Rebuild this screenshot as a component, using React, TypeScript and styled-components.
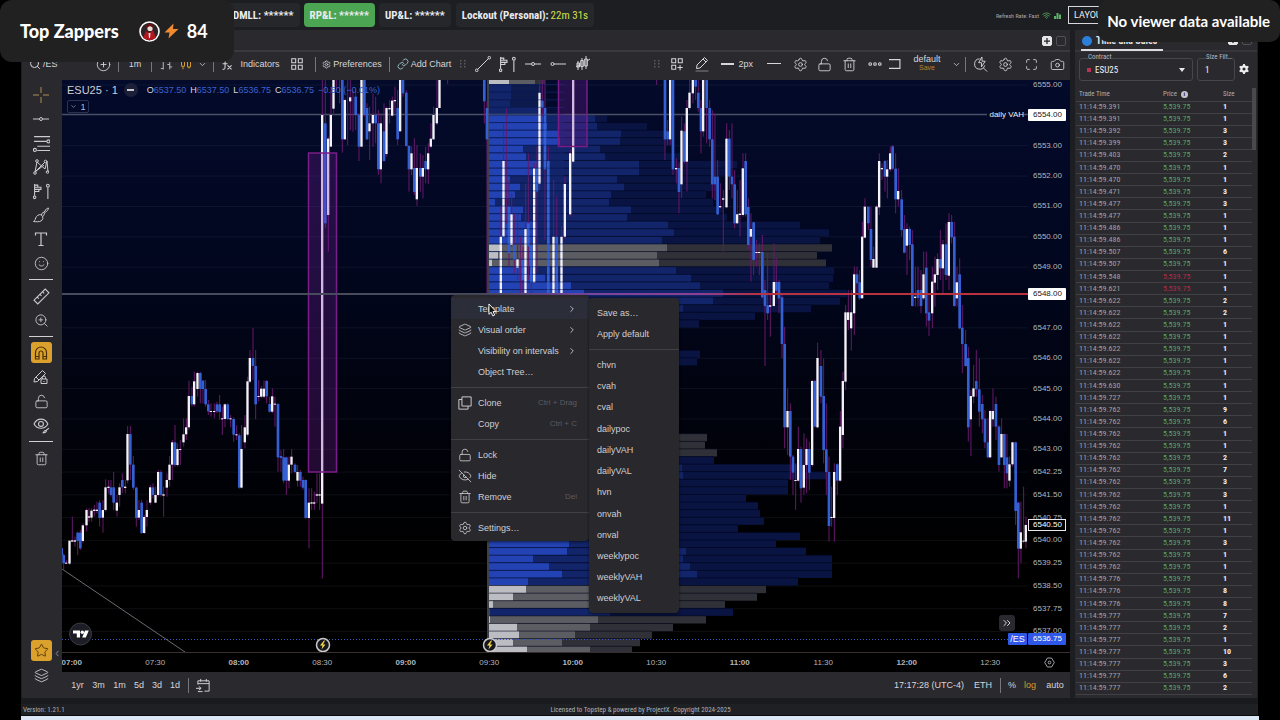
import React from "react";
import styled, { createGlobalStyle } from "styled-components";
import {
  Camera, ChevronDown, ChevronRight, ChevronsRight, Copy, EyeOff, Eye, Layers, Link as LinkIcon, LockOpen,
  Maximize, Pencil, PlusCircle, Ruler, Search, Settings, Smile, Star, Trash2, Wifi, ZoomIn,
} from "lucide-react";

const sans = `"Liberation Sans", Arial, sans-serif`;
const narrow = `"Roboto Condensed", "Liberation Sans Narrow", Roboto, sans-serif`;

const Global = createGlobalStyle`
  * { box-sizing: border-box; }
  body { margin: 0; background: #000; color: #d4d4d8; font-family: ${sans}; font-size: 9px; }
  button, input, select { font: inherit; color: inherit; background: none; border: 0; padding: 0; margin: 0; }
  button { cursor: pointer; }
`;

/* ---------- page frame ---------- */
const Page = styled.div`
  position: relative; min-height: 100vh; display: flex; flex-direction: column; overflow: hidden;
  margin: 0; padding: 0 22px 0 21px;
`;
const Header = styled.header`
  height: 30px; display: flex; align-items: center; gap: 4px; padding: 0 130px 0 206px;
  background: #1d1e22; font-family: ${narrow};
`;
const Pill = styled.div<{ $on?: boolean; $wide?: boolean }>`
  height: 24px; display: flex; align-items: center; gap: 2px; padding: 0 6px; border-radius: 4px;
  margin-left: ${(p) => (p.$wide ? "1px" : "0")};
  background: ${(p) => (p.$on ? "#4ba553" : "#26272b")};
  color: #ececee; font-size: 11px; font-weight: 700; white-space: nowrap;
`;
const Lime = styled.span`color: #cfe04a; font-weight: 400;`;
const Refresh = styled.div`
  margin-left: auto; display: flex; align-items: center; gap: 3px; margin-right: 3px;
  font-size: 6px; color: #a9a9ae; white-space: nowrap;
`;
const LayoutButton = styled.button`
  width: 60px; height: 18px; border: 1px solid #d8d8dc; font: 9px Roboto, sans-serif; text-align: left;
  padding-left: 5px; color: #eee;
`;
const Main = styled.main`flex: 1; min-height: 0; display: flex; gap: 5px; background: #1d1e22;`;
const Footer = styled.footer`
  height: 18px; display: flex; align-items: center; background: #1f2024; border-bottom: 1px solid #0b0b0d;
  border-top: 6px solid #1a1b1f; font: 7px ${narrow}; color: #b0b0b4;
  span { flex: 1; padding-left: 2px; }
  p { margin: 0; }
  &::after { content: ""; flex: 1; }
`;
const Strip = styled.div`height: 4px; background: #dce7f5; margin-right: -1px;`;

/* ---------- chart panel ---------- */
const ChartPanel = styled.section`
  flex: 1; min-width: 0; display: flex; flex-direction: column; background: #2a292e; margin-left: 1px;
`;
const TabStrip = styled.div`
  height: 22px; display: flex; align-items: center; justify-content: flex-end; gap: 4px; padding: 2px 4px 0 0;
  border-bottom: 2px solid #3a393e;
`;
const SquareButton = styled.button<{ $solid?: boolean }>`
  width: 10px; height: 10px; border-radius: 2px; display: grid; place-items: center;
  background: ${(p) => (p.$solid ? "#e6e6e8" : "transparent")};
  border: 1px solid ${(p) => (p.$solid ? "#e6e6e8" : "#515056")};
  color: #222;
`;
const Toolbar = styled.div`height: 28px; display: flex; align-items: center; font-size: 9px; padding-bottom: 4px;`;
const Cell = styled.button<{ $w: number; $amber?: boolean; $start?: boolean }>`
  width: ${(p) => p.$w}px; height: 24px; flex: none; display: flex; align-items: center; gap: 2px; white-space: nowrap;
  justify-content: ${(p) => (p.$start ? "flex-start" : "center")};
  padding: 0 ${(p) => (p.$start ? "7px" : "0")};
  color: ${(p) => (p.$amber ? "#d99a2b" : "#d6d6d9")};
`;
const Bar = styled.i<{ $w?: number }>`
  width: ${(p) => p.$w ?? 6}px; height: 15px; flex: none; display: block;
  background: linear-gradient(#77767b, #77767b) center / 1px 100% no-repeat;
`;
const Spacer = styled.div`flex: 1;`;
const LayoutName = styled.span`
  display: flex; flex-direction: column; align-items: center; font-size: 9px; line-height: 9px; padding-bottom: 2px;
  small { font-size: 7px; line-height: 7px; color: #b9822c; }
`;
const ChartBody = styled.div`position: relative; flex: 1; min-height: 0; display: flex;`;
const SideTools = styled.nav`width: 40px; display: flex; flex-direction: column; align-items: center; padding: 3px 2px 11px 0;`;
const SideTool = styled.button<{ $active?: boolean }>`
  width: 21px; height: ${(p) => (p.$active ? 21 : 24)}px; flex: none; display: grid; place-items: center; border-radius: 3px;
  background: ${(p) => (p.$active ? "#dba12c" : "transparent")};
  color: ${(p) => (p.$active ? "#4a3008" : "#cbcbd0")};
  margin: ${(p) => (p.$active ? "1px 0 2px" : "0")};
`;
const SideRule = styled.hr`width: 24px; height: 1px; border: 0; margin: 4px 0; background: #cfcfd4; flex: none;`;
const FoldHandle = styled.button`
  position: absolute; left: 32px; bottom: 41px; width: 7px; height: 8px; display: grid; place-items: center; color: #9a9aa0;
`;
const ChartColumn = styled.div`flex: 1; min-width: 0; display: flex; flex-direction: column;`;
const PlotRow = styled.div`
  flex: 1; min-height: 0; display: flex; border-bottom: 1px solid #37302c;
  background: linear-gradient(#030a2a, #020720 30%, #01030f 55%, #000 82%);
`;
const Plot = styled.div`position: relative; flex: 1; min-width: 0;`;
const PlotDrawing = styled.svg`position: absolute; inset: 0; width: 100%; height: 100%;`;
const PriceAxis = styled.div`position: relative; width: 42px; font-size: 8px; color: #b4b5bd;`;
const Tick = styled.span<{ $kind?: "line" | "last" | "blue" }>`
  position: absolute; left: 0; width: 38px; height: 12px; line-height: 12px; margin-top: -6px; padding-left: 5px;
  ${(p) => p.$kind === "line" && "background:#fff;color:#15161a;border-radius:1px;"}
  ${(p) => p.$kind === "last" && "background:#000;color:#fff;outline:1px solid #e8e8ea;outline-offset:-1px;"}
  ${(p) => p.$kind === "blue" && "background:#2f57e8;color:#fff;border-radius:1px;"}
`;
const Symbol = styled.span`
  position: absolute; right: 1px; bottom: 7px; width: 19px; height: 12px; line-height: 12px; text-align: center;
  background: #2f57e8; color: #fff; font-size: 9px; border-radius: 1px;
`;
const LineLabel = styled.span`
  position: absolute; right: 4px; top: 28px; font-size: 8px; line-height: 13px; color: #f0f0f2;
  background: #030926; padding-left: 2px;
`;
const Legend = styled.div`
  position: absolute; left: 5px; top: 3px; display: flex; align-items: center; height: 14px; font-size: 9px; color: #3b63cf;
  gap: 4px; white-space: nowrap;
  h1 { margin: 0; font-size: 11px; font-weight: 400; color: #cfd0d6; }
  b { font-weight: 400; color: #d8d9de; }
`;
const Dash = styled.i`
  width: 14px; height: 14px; margin: 0 5px 0 2px; border-radius: 7px; display: block;
  background: linear-gradient(#c8c8cc, #c8c8cc) center / 7px 2px no-repeat, #1b2038;
`;
const Collapse = styled.button`
  position: absolute; left: 5px; top: 20px; width: 22px; height: 13px; border: 1px solid #2a3050; border-radius: 2px;
  display: flex; align-items: center; justify-content: center; gap: 3px; color: #b9bbc6; font-size: 9px;
`;
const JumpButton = styled.button`
  position: absolute; right: 13px; bottom: 21px; width: 16px; height: 16px; border-radius: 3px; background: #2a2930;
  display: grid; place-items: center; color: #d6d6da;
`;
const TimeAxis = styled.div`
  height: 19px; display: flex; background: #000; color: #b4b5bd; font-size: 8px; overflow: hidden;
`;
const TimeCells = styled.div`flex: 1; display: flex; margin-left: -32px; margin-right: -4px;`;
const TimeCell = styled.span<{ $hour: boolean }>`
  flex: 1; text-align: center; line-height: 19px; font-weight: ${(p) => (p.$hour ? 700 : 400)};
`;
const AxisCorner = styled.button`width: 42px; display: grid; place-items: center; color: #c4c4c8;`;
const RangeBar = styled.div`height: 26px; display: flex; align-items: center; font-size: 9px; color: #c9c9cd; padding-left: 5px;`;

/* ---------- menus ---------- */
const Menu = styled.div`
  position: absolute; left: 389px; top: 215px; width: 138px; padding: 3px 0; border-radius: 4px;
  background: #29282d; color: #cfcfd3; box-shadow: 0 1px 3px rgba(0, 0, 0, .6);
`;
const MenuRow = styled.button<{ $hot?: boolean }>`
  width: 100%; height: 21px; display: grid; grid-template-columns: 27px 1fr auto; align-items: center; text-align: left;
  font-size: 9px; white-space: nowrap; padding-right: 12px;
  background: ${(p) => (p.$hot ? "#2b2d38" : "transparent")};
  svg:first-child { justify-self: center; }
  kbd { font: 8px ${sans}; color: #5c5b61; }
  span { grid-column: 2; }
`;
const MenuRule = styled.hr`width: 100%; height: 1px; border: 0; margin: 5px 0 4px; background: #414046;`;
const SubMenu = styled.div`
  position: absolute; left: 527px; top: 218px; width: 90px; height: 315px; padding: 4px 0; border-radius: 4px;
  background: #29282d; color: #cfcfd3; display: flex; flex-direction: column; box-shadow: 0 1px 3px rgba(0, 0, 0, .6);
`;
const SubRow = styled.button`flex: 1; text-align: left; padding-left: 8px; font-size: 9px;`;
const Cursor = styled.svg`position: absolute; left: 426px; top: 223px; width: 9px; height: 14px;`;

/* ---------- time & sales ---------- */
const Tape = styled.aside`
  width: 182px; display: flex; flex-direction: column; background: #2a292e; font-family: ${narrow}; margin-right: 1px;
`;
const TapeTabs = styled.div`
  height: 22px; display: flex; align-items: center; gap: 4px; padding: 0 5px 0 6px; border-bottom: 2px solid #36353a;
`;
const TapeTab = styled.button`
  width: 82px; height: 21px; display: flex; align-items: center; gap: 4px; border-bottom: 2px solid #dcdce0;
  padding-top: 3px; font-size: 10px; font-weight: 700; color: #e2e2e4; margin-right: auto; white-space: nowrap;
`;
const BlueDot = styled.i`width: 10px; height: 10px; border-radius: 5px; background: #2b7fd8; display: block; flex: none; margin-left: 1px;`;
const Filters = styled.form`height: 36px; display: flex; align-items: center; gap: 4px; padding: 0 8px 0 4px; margin: 0;`;
const Field = styled.label<{ $w?: number }>`
  position: relative; height: 23px; display: flex; align-items: center; gap: 4px; padding: 0 7px; margin-top: -1px;
  border: 1px solid #47464c; border-radius: 3px; ${(p) => (p.$w ? `width:${p.$w}px;` : "flex:1;")}
  > span { position: absolute; top: -6px; left: 8px; font-size: 7px; line-height: 9px; background: #2a292e; color: #b9b9bd; white-space: nowrap; }
  select, input { appearance: none; flex: 1; width: 10px; font-size: 9px; color: #f2f2f3; outline: 0; }
`;
const RedDot = styled.i`width: 4px; height: 4px; background: #b83254; display: block;`;
const Caret = styled.i`border: 3px solid transparent; border-top: 4px solid #e8e8ea; border-bottom: 0;`;
const TapeScroll = styled.div`
  flex: 1 1 0; min-height: 0; overflow: hidden; margin-bottom: 1px; padding: 0 5px 0 1px;
  background: linear-gradient(#4a494e, #4a494e) right 1px top / 4px 62px no-repeat;
`;
const Table = styled.table`
  width: 100%; height: 618px; border-collapse: collapse; table-layout: fixed; font-size: 8px; line-height: 10px;
  th { height: 13px; font-size: 7px; font-weight: 400; color: #aeaeb2; text-align: left; padding: 0 0 0 3px; }
  td { padding: 0 0 0 3px; border-top: 1px solid #414045; color: #a0a0a5; }
  td:last-child { color: #f0f0f2; font-weight: 700; }
`;
const Price = styled.td<{ $down?: boolean }>`&& { color: ${(p) => (p.$down ? "#b02c48" : "#58a464")}; }`;
const Info = styled.i`
  display: inline-grid; place-items: center; width: 7px; height: 7px; border-radius: 4px; background: #c6c6ca; color: #222;
  font: 700 6px ${sans}; margin-left: 2px; vertical-align: middle;
`;

/* ---------- stream overlays ---------- */
const Zappers = styled.div`
  position: absolute; left: 0; top: 0; width: 234px; height: 62px; border-radius: 12px; background: #212121;
  display: flex; align-items: center; padding-left: 20px; color: #fff; font: 700 18px Lato, sans-serif;
  strong { margin-right: 20px; } svg + svg { margin: 0 8px 0 4px; }
`;
const Viewers = styled.div`
  position: absolute; right: 0; top: 0; width: 182px; height: 42px; border-radius: 10px; background: #212121;
  display: flex; align-items: center; justify-content: flex-end; padding-right: 10px; color: #fff; font: 700 15px Lato, sans-serif;
  white-space: nowrap;
`;

/* ---------- data ---------- */
type Candle = [k: number, x: number, top: number, bottom: number, high: number, low: number];
// k: 1 = up (white), 0 = down (blue), 2 = wick only. Coordinates are thirds of a chart unit from the segment origin.
const segments: { at: [number, number]; bars: Candle[] }[] = [
  { at: [20, 340], bars: [
    [0,125,625,645,620,650],[0,131,645,670,640,690],[1,139,668,671,660,672],[1,149,602,671,602,675],[1,157,601,605,530,605],[1,165,601,605,590,620],
    [0,173,578,603,575,645],[0,181,578,625,570,630],[1,189,556,603,550,610],[1,200,510,556,505,575],[1,207,529,533,505,545],[1,215,512,533,505,545],
    [1,223,509,513,495,530],[1,231,509,513,485,520],[0,239,488,534,480,560],[1,249,510,533,480,578],[1,257,442,510,418,515],[1,266,440,444,420,460],
    [0,273,442,465,420,470],[0,281,442,488,396,510],[1,291,488,512,465,530],[1,299,442,465,430,500],[0,307,420,442,400,460],[1,316,440,444,420,460],
    [1,323,282,421,258,430],[0,331,282,374,258,420],[0,340,374,443,348,450],[0,349,443,534,440,560],[1,357,510,533,480,540],[0,365,488,579,480,582],
    [1,373,531,579,525,582],[1,381,510,531,480,560],[1,391,442,488,435,495],[0,399,442,465,430,475],[1,407,465,488,440,490],[1,415,396,465,390,470],
    [0,423,396,465,390,470],[1,431,463,467,440,530],[1,441,420,443,400,470],[1,449,374,420,348,440],[1,457,307,374,300,420],[0,465,307,375,255,380],
    [1,473,327,375,310,380],[1,481,327,330,300,375],[1,491,283,307,235,320],[1,499,262,283,235,300],[1,507,168,262,122,270],[0,516,168,193,140,200],
    [1,523,124,193,95,200],[1,533,99,147,95,170],[0,541,99,147,95,190],[0,549,122,147,120,190],[0,557,147,193,120,200],[0,565,193,214,180,225],
    [1,573,213,216,190,230],[1,583,213,216,190,235],[0,591,193,214,185,220],[0,599,193,216,165,240],[1,607,235,238,200,285],[1,615,193,237,190,262],
    [0,623,193,237,190,240],[1,632,235,238,225,262],[0,641,237,284,232,305],[1,650,283,286,255,300],[0,658,286,443,280,446],[1,665,327,443,255,446],
    [1,675,262,307,225,325],[1,683,124,284,110,290],
  ] },
  { at: [240, 330], bars: [
    [1,30,84,155,60,160],[0,39,84,108,-6,150],[0,47,108,223,60,268],[1,56,198,201,150,215],[1,64,176,200,168,205],[1,72,176,200,152,205],
    [0,80,153,199,150,220],[0,89,222,245,200,248],[1,97,199,245,175,250],[1,105,221,224,200,290],[0,114,222,382,220,425],[0,123,378,384,360,425],
    [0,131,382,452,357,460],[0,139,382,452,380,495],[1,147,404,452,380,475],[1,155,380,404,357,430],[0,165,404,426,400,430],[1,173,426,452,405,470],
    [0,181,426,452,420,470],[0,189,450,473,440,480],[0,197,450,564,448,566],[1,207,518,564,475,655],[1,215,517,521,475,540],[1,223,517,521,485,540],
    [1,231,493,497,430,520],[1,239,493,497,430,540],[1,247,-645,521,-750,746],
  ] },
  { at: [240, 80], bars: [
    [0,256,130,430,0,445],[1,265,176,405,170,515],[1,273,105,200,20,200],[1,281,0,86,0,100],[2,289,0,0,0,30],[2,299,0,0,0,70],[0,307,0,178,0,218],
    [1,315,60,178,55,180],[2,323,0,0,0,195],[1,331,52,64,0,150],[2,339,0,0,30,155],[0,347,50,105,30,150],[0,357,105,200,100,243],[1,365,0,200,0,200],
    [0,373,0,105,0,110],[0,381,84,178,70,180],[1,389,130,154,80,240],[1,399,105,130,40,200],[0,407,105,130,50,190],[0,415,130,268,90,285],
    [1,423,130,268,100,310],[0,432,154,243,70,245],[1,440,84,222,80,230],[1,449,84,88,60,130],[1,457,62,107,50,110],[1,465,60,64,20,100],
    [0,473,84,178,30,195],[1,481,0,154,0,154],[0,489,0,40,0,50],[0,499,38,198,30,200],[0,507,198,268,195,335],[1,515,220,268,200,285],
    [0,523,264,336,175,345],[1,531,264,358,195,378],[0,541,264,290,220,335],[1,549,264,290,225,355],[0,557,243,268,200,310],[1,565,220,268,190,312],
    [1,573,176,200,130,205],[1,581,105,178,80,180],[1,591,84,130,0,135],[1,599,0,84,0,84],[2,623,0,0,0,12],[0,733,0,64,0,130],[0,741,84,178,64,640],
  ] },
  { at: [480, 80], bars: [
    [1,63,470,640,380,640],[1,71,243,470,130,475],[2,80,0,0,85,430],[0,87,380,520,300,560],[1,95,403,495,340,500],[0,103,495,540,400,580],[1,113,537,563,400,600],
    [2,121,0,0,470,640],[0,129,540,600,500,640],[1,137,447,640,310,640],[0,145,430,500,220,600],[0,154,495,607,480,640],[1,163,265,607,250,610],[0,171,265,335,200,580],
    [1,179,38,312,0,330],[0,187,62,84,0,110],[0,195,84,268,0,480],[0,205,243,640,200,640],[1,221,470,640,300,640],[0,230,470,640,350,640],
    [1,245,470,640,440,640],[1,255,312,470,290,475],[1,271,220,403,210,410],[1,280,0,245,0,250],
    [2,530,0,0,0,15],[0,555,0,178,0,240],[0,563,154,178,120,195],[1,571,0,178,0,195],[0,579,0,268,0,285],[1,589,264,268,235,310],[0,597,264,336,250,400],
    [1,605,152,313,110,355],[0,613,154,245,130,250],[1,621,84,245,60,335],[1,629,38,84,0,90],[1,639,0,40,0,70],[0,647,0,20,0,60],[0,655,38,84,0,95],
    [0,663,84,154,60,220],[1,670,0,154,0,170],[0,680,0,84,0,190],[0,689,84,178,60,200],[0,697,178,313,90,355],[0,705,290,313,100,360],[0,713,290,403,240,405],
    [1,721,378,382,310,385],[1,730,355,359,330,515],[1,740,176,382,130,385],[0,748,176,290,150,330],[0,756,290,313,130,355],[0,764,313,430,270,445],
    [1,772,403,430,330,430],[1,780,401,405,300,470],[1,789,265,405,220,410],[0,797,243,403,220,410],[0,805,381,495,355,510],[1,813,447,470,400,605],[0,821,427,540,425,585],
  ] },
  { at: [640, 80], bars: [
    [1,350,516,519,480,560],[1,358,516,519,490,585],[0,367,516,652,465,655],[0,375,630,678,600,858],[0,383,676,700,520,720],[1,391,676,680,640,770],
    [1,402,606,678,490,680],[0,409,606,632,535,640],[0,417,606,655,600,700],[0,426,652,792,640,835],
    [1,625,697,720,630,750],[1,634,697,745,630,812],[1,643,583,700,560,765],[0,651,583,610,560,640],[0,659,607,655,570,660],[1,667,470,655,425,655],
    [1,675,380,473,355,475],[0,685,380,430,380,450],[0,693,447,540,380,560],[1,701,537,563,500,563],[1,710,380,563,375,563],[1,718,243,382,220,405],
    [1,726,264,268,250,300],[0,735,243,290,240,335],[1,742,268,290,240,355],[1,751,220,268,200,275],[0,758,199,266,195,270],
  ] },
  { at: [860, 80], bars: [
    [0,107,266,358,220,400],[1,115,333,358,265,380],[0,125,358,450,330,470],[0,133,448,518,405,520],[1,141,447,497,430,585],[0,149,447,495,440,540],
    [0,157,493,678,450,680],[1,166,650,654,560,680],[0,174,630,654,560,680],[0,183,630,678,570,700],[1,191,583,655,515,660],[0,199,563,700,515,740],
    [0,207,697,722,640,768],[1,217,605,700,560,745],[1,225,583,608,530,680],[1,233,537,585,520,630],[0,241,537,565,450,600],[1,249,493,565,480,640],
    [0,258,493,585,430,600],[1,267,426,587,400,630],[0,275,426,472,405,490],[0,283,470,678,425,680],[1,291,607,655,560,680],[0,299,583,745,535,748],
  ] },
  { at: [640, 330], bars: [
    [0,434,42,292,-10,355],[1,443,243,292,175,375],[0,451,243,380,220,450],[0,459,380,428,375,495],[1,467,450,453,400,540],[1,475,357,452,290,455],
    [0,483,357,475,350,518],[1,492,405,473,310,495],[1,500,357,405,325,490],[0,508,357,428,335,480],[1,517,153,405,150,410],[0,525,153,290,150,292],[1,533,84,292,38,295],
    [0,543,108,200,60,220],[0,551,198,360,85,400],[0,559,358,426,220,495],[0,567,426,588,380,635],[1,575,561,564,470,590],[1,583,426,564,400,635],
    [0,592,403,452,400,495],[1,601,290,452,243,455],[1,609,153,315,125,355],[1,617,-53,155,-75,180],
    [0,967,-7,42,-75,130],[0,977,42,108,0,110],[0,985,84,292,50,335],[1,993,198,268,180,378],[1,1001,175,200,105,220],[0,1009,153,178,60,200],
    [0,1018,178,245,85,290],[0,1027,222,268,195,310],[0,1035,266,337,240,355],[0,1044,337,382,265,385],[1,1051,243,382,240,385],[1,1059,243,268,175,290],
    [0,1068,222,290,200,330],[0,1077,290,405,285,425],[1,1085,312,382,265,385],[0,1093,312,405,310,475],[0,1101,382,430,312,475],[1,1109,403,452,380,470],
    [1,1118,337,403,335,410],[0,1127,337,543,335,585],[0,1135,518,656,515,745],[1,1143,607,656,515,700],[1,1151,632,635,470,640],[1,1158,585,635,560,655],
  ] },
];

// Volume profile: row index, tone, and right edges of the session, daily and weekly volumes.
type Row = [number, "b" | "g" | "d", number, number, number];
const profile: Row[] = [
  [0,"g",509,535,545],[1,"d",511,543,546],[2,"d",511,543,546],[3,"d",510,543,546],[4,"d",540,543,560],[5,"b",543,595,607],[6,"b",547,597,647],
  [7,"b",558,621,668],[8,"b",560,620,670],[9,"b",523,600,665],[10,"b",526,605,680],[11,"b",541,639,737],[12,"b",533,639,727],[13,"b",510,617,713],
  [14,"b",520,624,717],[15,"b",515,611,706],[16,"b",495,609,713],[17,"b",523,631,723],[18,"b",521,627,727],[19,"b",537,668,800],[20,"b",537,674,829],
  [21,"b",535,662,820],[22,"g",502,667,832],[23,"g",498,657,817],[24,"g",492,659,826],[25,"b",527,676,834],[26,"b",545,691,833],[27,"b",571,700,829],
  [28,"b",584,723,847],[29,"b",540,713,840],[30,"b",530,683,811],[31,"b",520,640,755],[32,"b",510,620,699],[36,"b",490,600,700],[37,"b",490,600,697],
  [47,"g",500,600,707],[48,"g",500,600,705],[49,"g",500,600,717],[50,"b",520,640,714],[51,"b",520,682,800],[52,"b",520,683,826],[53,"b",520,660,788],
  [54,"b",520,660,788],[55,"b",520,640,746],[56,"b",520,650,758],[57,"b",520,650,760],[58,"b",520,650,764],[59,"b",520,640,738],[60,"b",550,670,800],
  [61,"b",569,670,776],[62,"b",567,686,806],[63,"b",533,683,832],[64,"b",549,690,832],[65,"b",562,697,832],[66,"b",528,670,798],[67,"g",526,650,766],
  [68,"g",513,640,757],[69,"g",493,620,725],[70,"b",490,610,733],[71,"g",490,598,706],[72,"g",517,590,673],[73,"g",519,575,652],[74,"g",513,562,640],
  [75,"g",527,590,632],
];
const tones = {
  b: ["#2343b4", "#12256a", "#091443"],
  g: ["#bcbdc2", "#5b5d63", "#303138"],
  d: ["#12256a", "#0c1a4e", "#070f38"],
};
const rowTop = (i: number) => 77 + i * 7.59;

const ticks = [6555, 6553, 6552, 6551, 6550, 6549, 6547, 6546, 6545, 6544, 6543, 6542.25, 6541.5, 6540.75, 6540, 6539.25, 6538.5, 6537.75, 6537];
const priceY = (p: number) => 85 + (6555 - p) * 30.36;
const priceTop = (p: number) => ({ top: `${((priceY(p) - 80) / 572) * 100}%` });

const trades: [string, number, boolean?][] = [
  ["391",1],["391",1],["392",3],["399",3],["403",2],["470",1],["470",1],["471",3],["477",3],["477",1],["486",1],["486",1],["507",6],["507",1],
  ["548",1,true],["621",1,true],["622",2],["622",2],["622",1],["622",1],["622",1],["622",1],["622",1],["630",1],["727",1],["762",9],["762",6],
  ["762",1],["762",1],["762",2],["762",7],["762",3],["762",3],["762",1],["762",11],["762",1],["762",3],["762",1],["762",1],["776",1],["776",8],
  ["776",8],["777",7],["777",2],["777",1],["777",10],["777",3],["777",6],["777",2],["777",1],
];
const tradeSecond = (ms: string) => `11:14:59.${ms}`;

/* ---------- drawings ---------- */
const Glyph = ({ d, size = 16, children, w = 1 }: { d?: string; size?: number; w?: number; children?: React.ReactNode }) => (
  <svg width={size} height={size} viewBox="0 0 16 16" fill="none" stroke="currentColor" strokeWidth={w} aria-hidden>
    {d && <path d={d} />}{children}
  </svg>
);
const HLine = () => <Glyph d="M0 8h6.500M9.500 8H16"><circle cx="8" cy="8" r="1.500" /></Glyph>;
const Ray = () => <Glyph d="M4 8h12"><circle cx="2.500" cy="8" r="1.500" /></Glyph>;
const Trend = () => <Glyph d="M2.500 13.500l11-11"><circle cx="1.700" cy="14.300" r="1.300" /><circle cx="14.300" cy="1.700" r="1.300" /></Glyph>;
const Position = () => <Glyph size={17} d="M1.500 1v11M1.500 2h3v2h3v2h-2v2h-4M5 4H2M14 4v11M2 6h3"><circle cx="1.500" cy="13.500" r="1.200" /><circle cx="14" cy="2.500" r="1.300" /></Glyph>;
const Fib = () => <Glyph size={17} d="M1 1.500h15M1 6h12M4 10.500h12M4 14.500h12"><circle cx="14.500" cy="6" r="1.400" /><circle cx="1.800" cy="14" r="1.400" /></Glyph>;
const Pattern = () => <Glyph d="M2 13L4 3l8 7 2-8 1 11M2 13l9-7M3 12L12 3"><circle cx="2" cy="14" r="1.300" /><circle cx="4" cy="2" r="1.300" /><circle cx="12.500" cy="2.500" r="1.300" /><circle cx="14.500" cy="13" r="1.300" /></Glyph>;
const BrushGlyph = () => <Glyph d="M.500 14.500c2-1 1.500-3 3-5s4-2.500 5.500-1 1 4.500-1 5.500-5 .800-7.500.500zM8.500 8c0-3 2.500-2 3.500-4s1.500-2.500 3.500-3c-.500 2-1 3-3 4s-.500 3.500-3 4.500" />;
const TextGlyph = () => <Glyph w={1.2} d="M2.500 4.500V2h11v2.500M8 2v12.500M5.500 14.500h5" />;
const EyeBrush = () => <Glyph size={17} d="M1 6.500c3-6 10-6 13 0-3 5.500-10 5.500-13 0zM9 15c1.500-.200 1-2 2.500-2.300s2 2-2.500 2.300zM12.500 12.500l2.500-2"><circle cx="7.500" cy="6.500" r="2.300" /></Glyph>;
const Magnet = () => <Glyph w={1.2} d="M2.500 14V7.500a5.500 5.500 0 0 1 11 0V14H10V8a2 2 0 0 0-4 0v6zM2.500 11.500H6M10 11.500h3.500" />;
const Candles = () => <Glyph size={12} w={1.3} d="M4 1v3M4 11v4M2 4h4v7H2zM12 1v2M12 12v2M10 3h4v9h-4z" />;
const CandlePattern = () => <Glyph d="M1 11l3-2M12 5l3-2M3 5v9M2 7h2.500v4H2zM7 2v12M5.700 4.500h2.600v6H5.700zM11 0v13M9.700 3h2.600v7H9.700z" />;
const Bars = () => <Glyph size={13} d="M4 3v11M1 13h3M4 4h3M12 5v9M9 8h3M12 11h3" />;
const Grid = ({ plus }: { plus?: boolean }) => (
  <Glyph size={14} w={1.200} d={plus ? "M11.500 9v6M8.500 12h6" : "M9.500 9.500h4.500v4.500H9.500z"}>
    <path d="M2 2h4.500v4.500H2zM9.500 2H14v4.500H9.500zM2 9.500h4.500V14H2z" />
  </Glyph>
);
const Cross = () => <svg width="16" height="16" viewBox="0 0 16 16" stroke="#b08d4c" aria-hidden><path d="M8 0v6M8 10v6" /><path d="M0 8h6M10 8h6" /></svg>;
const Dots = () => <svg width="6" height="10" viewBox="0 0 6 10" fill="#5d5c62" aria-hidden>{[0, 4].map((x) => [1, 4, 7].map((y) => <rect key={`${x}${y}`} x={x} y={y} width="1.500" height="1.500" />))}</svg>;
const Stroke = ({ w, h }: { w: number; h: number }) => <svg width={w} height="4" aria-hidden><rect y="1" width={w} height={h} fill="currentColor" /></svg>;
const More = () => <Glyph size={14} w={1.200}><circle cx="2.500" cy="8" r="1.500" /><circle cx="8" cy="8" r="1.500" /><circle cx="13.500" cy="8" r="1.500" /></Glyph>;
const Hex = ({ size = 14 }: { size?: number }) => <Glyph size={size} w={1.200} d="M5 1.500h6L15 8l-4 6.500H5L1 8z"><circle cx="8" cy="8" r="2" /></Glyph>;
const QuickSearch = () => <Glyph size={15} d="M7 2a5.500 5.500 0 1 0 5.500 7M11 11.500l4 4M9.500 0L6 6h3v4.500L13 4.500H9.700z" />;
const Fx = () => <Glyph size={13} w={1.300} d="M8 2C5 1 5 3 5 5v6c0 3-1 3-3 3M2 7h6M8 9l5 5M13 9l-5 5" />;
const GoToDate = () => <Glyph size={15} d="M2 7V3h12v11H9M2 6h12M5 1v3M11 1v3M0 11h5M3 9l2.500 2L3 13M2 14.500h5" />;
const BoltBadge = ({ x }: { x: number }) => (
  <g><circle cx={x} cy="645" r="6.500" fill="#16171d" stroke="#c9c9ce" strokeWidth="1.500" /><path d={`M${x + 1} 640.500l-4 5h2.500l-1 4 4-5h-2.500l2-4z`} fill="#f5d94a" /></g>
);

function ChartDrawing() {
  return (
    <PlotDrawing viewBox="62 80 966 572" preserveAspectRatio="none" role="img" aria-label="ESU25 one minute chart">
      <defs>
        <linearGradient id="level" x1="62" x2="1028" y1="0" y2="0" gradientUnits="userSpaceOnUse">
          <stop offset="0" stopColor="#474b5c" /><stop offset=".43" stopColor="#474b5c" /><stop offset=".53" stopColor="#75479a" />
          <stop offset=".66" stopColor="#8d3f92" /><stop offset=".72" stopColor="#b8323f" /><stop offset="1" stopColor="#b8323f" />
        </linearGradient>
      </defs>
      {ticks.map((t) => <path key={t} d={`M62 ${priceY(t)}H1028`} stroke="#8090b0" strokeOpacity=".1" />)}
      <path d="M488 80V652" stroke="#3d404b" strokeWidth="2" />
      {profile.map(([i, tone, a, b, c]) => (
        <g key={i}>
          {[c, b, a].map((edge, n) => <rect key={n} x="489" y={rowTop(i)} width={edge - 489} height="7.590" fill={tones[tone][2 - n]} />)}
          <path d={`M489 ${rowTop(i)}H${c}`} stroke="#02051c" strokeOpacity=".55" />
        </g>
      ))}
      <path d="M62 569L185 652" stroke="#6b6b70" />
      <path d="M62 114.500H1028" stroke="#4a4f66" strokeWidth="1.500" />
      {segments.map((s, n) => (
        <g key={n} transform={`translate(${s.at[0]} ${s.at[1]}) scale(.3333)`}>
          {s.bars.map(([k, x, t, b, h, l], i) => (
            <g key={i}>
              <path d={`M${x} ${h}V${l}`} stroke="#67196c" strokeWidth="3" />
              {k !== 2 && <rect x={x - 4} y={t} width={k === 1 ? 7 : 8} height={b - t} fill={k === 1 ? "#f4f2f8" : "#3560d4"} />}
            </g>
          ))}
        </g>
      ))}
      {profile.slice(0, 31).map(([i]) => <path key={i} d={`M489 ${rowTop(i)}H564`} stroke="#152c80" strokeOpacity=".55" />)}
      <g fill="#7a1fa0" fillOpacity=".28" stroke="#7a1d88" strokeWidth="1.500">
        <rect x="308.500" y="153" width="28" height="319" /><rect x="558.500" y="70" width="28.500" height="76.500" />
      </g>
      <rect x="62" y="293" width="966" height="2" fill="url(#level)" />
      <path d="M62 639.500H1010" stroke="#3c58c4" strokeDasharray="1 2" />
      <BoltBadge x={323} /><BoltBadge x={490} />
      <circle cx="80.500" cy="634" r="11" fill="#1c1d25" stroke="#3a3b44" />
      <g fill="#fff"><path d="M73 630.500h7v7h-3.200v-4H73z" /><circle cx="82.300" cy="632.300" r="1.700" /><path d="M85 630.500h3.800l-3 7h-3.600z" /></g>
    </PlotDrawing>
  );
}

const ic = { size: 15, strokeWidth: 1.4 };
const mi = { size: 14, strokeWidth: 1.4 };

function TopToolbar() {
  return (
    <Toolbar>
      <Cell $w={70} $start><Search size={12} strokeWidth={2} />/ES</Cell>
      <Cell $w={22} aria-label="Compare"><PlusCircle {...ic} /></Cell>
      <Bar $w={8} />
      <Cell $w={26}>1m</Cell>
      <Bar />
      <Cell $w={24} aria-label="Bars"><Bars /></Cell>
      <Cell $w={16} $amber aria-label="Candles"><Candles /></Cell>
      <Cell $w={16} aria-label="Chart types"><ChevronDown size={9} /></Cell>
      <Bar />
      <Cell $w={22} aria-label="Functions"><Fx /></Cell>
      <Cell $w={44}>Indicators</Cell>
      <Cell $w={30} aria-label="Templates"><Grid /></Cell>
      <Bar />
      <Cell $w={68}><Settings size={9} />Preferences</Cell>
      <Bar />
      <Cell $w={64}><LinkIcon size={12} color="#8fb8bd" />Add Chart</Cell>
      <Cell $w={14} aria-label="Move favourites"><Dots /></Cell>
      <Cell $w={25} aria-label="Trend line"><Trend /></Cell>
      <Cell $w={25} aria-label="Volume profile"><Position /></Cell>
      <Cell $w={25} aria-label="Horizontal line"><HLine /></Cell>
      <Cell $w={25} aria-label="Horizontal ray"><Ray /></Cell>
      <Cell $w={25} aria-label="Ghost feed"><CandlePattern /></Cell>
      <Spacer />
      <Cell $w={14} aria-label="Move toolbar"><Dots /></Cell>
      <Cell $w={26} aria-label="Drawing templates"><Grid plus /></Cell>
      <Cell $w={24} aria-label="Colour"><Glyph d="M3 9l7.500-7.500 3 3L6 12l-3.500.500zM9 3l3 3"><path d="M1.500 15h13" stroke="#56555b" strokeWidth="2" /></Glyph></Cell>
      <Cell $w={46}><Stroke w={13} h={2} />&nbsp;2px</Cell>
      <Cell $w={28} aria-label="Line style"><Stroke w={14} h={1} /></Cell>
      <Cell $w={24} aria-label="Settings"><Settings {...ic} /></Cell>
      <Cell $w={24} aria-label="Lock"><LockOpen {...ic} /></Cell>
      <Cell $w={26} aria-label="Remove"><Trash2 {...ic} /></Cell>
      <Cell $w={26} aria-label="More"><More /></Cell>
      <Cell $w={16} aria-label="Layout"><Glyph size={14} w={1.3} d="M0 3h12.500v10H0" /></Cell>
      <Cell $w={46}><LayoutName>default<small>Save</small></LayoutName></Cell>
      <Cell $w={12} aria-label="Layouts"><ChevronDown size={9} /></Cell>
      <Bar />
      <Cell $w={24} aria-label="Quick search"><QuickSearch /></Cell>
      <Cell $w={26} aria-label="Chart settings"><Settings {...ic} /></Cell>
      <Cell $w={26} aria-label="Fullscreen"><Maximize size={13} strokeWidth={1.6} /></Cell>
      <Cell $w={26} aria-label="Snapshot"><Camera {...ic} /></Cell>
    </Toolbar>
  );
}

function DrawingTools() {
  return (
    <SideTools>
      <SideTool aria-label="Cursor"><Cross /></SideTool>
      <SideTool aria-label="Line"><HLine /></SideTool>
      <SideTool aria-label="Fibonacci"><Fib /></SideTool>
      <SideTool aria-label="Patterns"><Pattern /></SideTool>
      <SideTool aria-label="Projection"><Position /></SideTool>
      <SideTool aria-label="Brush"><BrushGlyph /></SideTool>
      <SideTool aria-label="Text"><TextGlyph /></SideTool>
      <SideTool aria-label="Icons"><Smile {...ic} /></SideTool>
      <SideRule />
      <SideTool aria-label="Measure"><Glyph size={17} d="M1 11.500L11.500 1 15 4.500 4.500 15zM4 8.500l1.500 1.500M6.500 6L8 7.500M9 3.500L10.500 5" /></SideTool>
      <SideTool aria-label="Zoom in"><ZoomIn {...ic} /></SideTool>
      <SideRule />
      <SideTool $active aria-label="Magnet"><Magnet /></SideTool>
      <SideTool aria-label="Stay in drawing mode"><Glyph d="M1.500 9.500l8-8 3 3-8 8-3.500.500zM3 8l3 3M8 14.500V10h6v4.500zM9.500 10V8.500a1.500 1.500 0 0 1 3 0V10M11 12v1" /></SideTool>
      <SideTool aria-label="Lock drawings"><LockOpen {...ic} /></SideTool>
      <SideTool aria-label="Hide drawings"><EyeBrush /></SideTool>
      <SideRule />
      <SideTool aria-label="Remove drawings"><Trash2 {...ic} /></SideTool>
      <Spacer />
      <SideTool $active aria-label="Favourites"><Star {...ic} /></SideTool>
      <SideTool aria-label="Object tree"><Layers {...ic} /></SideTool>
    </SideTools>
  );
}

function ContextMenu() {
  return (
    <>
      <Menu role="menu">
        <MenuRow $hot><span>Template</span><ChevronRight size={10} /></MenuRow>
        <MenuRow><Layers {...mi} /><span>Visual order</span><ChevronRight size={10} /></MenuRow>
        <MenuRow><span>Visibility on intervals</span><ChevronRight size={10} /></MenuRow>
        <MenuRow><span>Object Tree…</span></MenuRow>
        <MenuRule />
        <MenuRow><Glyph size={14} w={1.1} d="M4.500 1h10.500v10.500H4.500zM4.500 4H1v11h10.500v-3.500" /><span>Clone</span><kbd>Ctrl + Drag</kbd></MenuRow>
        <MenuRow><span>Copy</span><kbd>Ctrl + C</kbd></MenuRow>
        <MenuRule />
        <MenuRow><LockOpen {...mi} /><span>Lock</span></MenuRow>
        <MenuRow><EyeOff {...mi} /><span>Hide</span></MenuRow>
        <MenuRow><Trash2 {...mi} /><span>Remove</span><kbd>Del</kbd></MenuRow>
        <MenuRule />
        <MenuRow><Settings {...mi} /><span>Settings…</span></MenuRow>
      </Menu>
      <SubMenu role="menu">
        {["Save as…", "Apply default"].map((t) => <SubRow key={t}>{t}</SubRow>)}
        <MenuRule />
        {["chvn", "cvah", "cval", "dailypoc", "dailyVAH", "dailyVAL", "hvn", "onvah", "onval", "weeklypoc", "weeklyVAH", "weeklyVAL"].map((t) => <SubRow key={t}>{t}</SubRow>)}
      </SubMenu>
      <Cursor viewBox="0 0 8 13" aria-hidden><path d="M.700.900v9.600l2.100-1.900 1.500 3.400 1.700-.800-1.500-3.200h2.800z" fill="#111" stroke="#fff" strokeWidth=".9" /></Cursor>
    </>
  );
}

const times = ["07:00", "07:30", "08:00", "08:30", "09:00", "09:30", "10:00", "10:30", "11:00", "11:30", "12:00", "12:30"];

export default function App() {
  return (
    <Page>
      <Global />
      <Header>
        <Pill>DMLL: ******</Pill>
        <Pill $on>RP&amp;L: ******</Pill>
        <Pill>UP&amp;L: ******</Pill>
        <Pill $wide>Lockout (Personal): <Lime>22m 31s</Lime></Pill>
        <Refresh>Refresh Rate: Fast <Wifi size={9} color="#5bb565" /><svg width="7" height="7" aria-hidden><path d="M0 4h2v3H0zM2.500 1h2v6h-2zM5 2.500h2V7H5z" fill="#5bb565" /></svg></Refresh>
        <LayoutButton>LAYOUT</LayoutButton>
      </Header>
      <Main>
        <ChartPanel>
          <TabStrip><SquareButton $solid aria-label="Add tab"><Glyph size={8} w={2.500} d="M8 2v12M2 8h12" /></SquareButton><SquareButton aria-label="Maximise" /></TabStrip>
          <TopToolbar />
          <ChartBody>
            <DrawingTools />
            <ChartColumn>
              <PlotRow>
                <Plot>
                  <ChartDrawing />
                  <Legend>
                    <h1>ESU25 · 1</h1><Dash />
                    <span><b>O</b>6537.50</span><span><b>H</b>6537.50</span><span><b>L</b>6536.75</span><span><b>C</b>6536.75</span><span>−0.50 (−0.01%)</span>
                  </Legend>
                  <Collapse><ChevronDown size={7} />1</Collapse>
                  <LineLabel>daily VAH</LineLabel>
                  <JumpButton aria-label="Scroll to latest"><ChevronsRight size={12} /></JumpButton>
                  <Symbol>/ES</Symbol>
                  <ContextMenu />
                </Plot>
                <PriceAxis>
                  {ticks.map((t) => <Tick key={t} style={priceTop(t)}>{t.toFixed(2)}</Tick>)}
                  <Tick $kind="line" style={priceTop(6554)}>6554.00</Tick>
                  <Tick $kind="line" style={priceTop(6548.11)}>6548.00</Tick>
                  <Tick $kind="last" style={priceTop(6540.5)}>6540.50</Tick>
                  <Tick $kind="blue" style={priceTop(6536.75)}>6536.75</Tick>
                </PriceAxis>
              </PlotRow>
              <TimeAxis>
                <TimeCells>{times.map((t) => <TimeCell key={t} $hour={t.endsWith("00")}>{t}</TimeCell>)}</TimeCells>
                <AxisCorner aria-label="Axis settings"><Hex size={11} /></AxisCorner>
              </TimeAxis>
              <RangeBar>
                <Cell $w={21}>1yr</Cell><Cell $w={21}>3m</Cell><Cell $w={21}>1m</Cell><Cell $w={18}>5d</Cell><Cell $w={18}>3d</Cell><Cell $w={18}>1d</Cell>
                <Bar $w={8} /><Cell $w={22} aria-label="Go to date"><GoToDate /></Cell>
                <Spacer />
                <Cell $w={82}>17:17:28 (UTC-4)</Cell><Cell $w={26}>ETH</Cell><Bar $w={8} />
                <Cell $w={16}>%</Cell><Cell $w={20} $amber>log</Cell><Cell $w={30}>auto</Cell>
              </RangeBar>
            </ChartColumn>
            <FoldHandle aria-label="Hide drawing toolbar"><Glyph size={7} w={2} d="M10 2L5 8l5 6" /></FoldHandle>
          </ChartBody>
        </ChartPanel>
        <Tape>
          <TapeTabs>
            <TapeTab><BlueDot />Time and Sales</TapeTab>
            <SquareButton $solid aria-label="Add tab"><Glyph size={8} w={2.500} d="M8 2v12M2 8h12" /></SquareButton><SquareButton aria-label="Maximise" />
          </TapeTabs>
          <Filters>
            <Field><span>Contract</span><RedDot /><select defaultValue="ESU25"><option>ESU25</option></select><Caret /></Field>
            <Field $w={38}><span>Size Filt…</span><input defaultValue="1" /></Field>
            <button type="button" aria-label="Tape settings">
              <svg width="10" height="10" viewBox="0 0 16 16" aria-hidden><circle cx="8" cy="8" r="4" fill="none" stroke="#f0f0f2" strokeWidth="4" /><path d="M8 0v16M1 4l14 8M15 4L1 12" stroke="#f0f0f2" strokeWidth="3" /><circle cx="8" cy="8" r="2.500" fill="#2a292e" /></svg>
            </button>
          </Filters>
          <TapeScroll>
            <Table>
              <colgroup><col width="84" /><col width="60" /><col /></colgroup>
              <thead><tr><th>Trade Time</th><th>Price <Info>i</Info></th><th>Size</th></tr></thead>
              <tbody>
                {trades.map(([ms, size, down], i) => (
                  <tr key={i}><td>{tradeSecond(ms)}</td><Price $down={down}>5,539.75</Price><td>{size}</td></tr>
                ))}
              </tbody>
            </Table>
          </TapeScroll>
        </Tape>
      </Main>
      <Footer><span>Version: 1.21.1</span><p>Licensed to Topstep &amp; powered by ProjectX. Copyright 2024-2025</p></Footer>
      <Strip />
      <Zappers>
        <strong>Top Zappers</strong>
        <svg width="21" height="21" viewBox="0 0 21 21" aria-hidden>
          <circle cx="10.500" cy="10.500" r="9.500" fill="#2c2426" stroke="#fff" strokeWidth="1.600" />
          <path d="M4 17l3-7 3.500 2L14 9l3 8-6.500 2.500z" fill="#b3161f" /><circle cx="11" cy="7.500" r="2.600" fill="#efdcd6" /><path d="M7 5l4-3 4 3v2l-4-2-4 2z" fill="#6b0f16" /><path d="M9.500 12h2l-.500 5h-1z" fill="#e9e2e0" />
        </svg>
        <svg width="15" height="16" viewBox="0 0 15 16" aria-hidden><path d="M9.500.500L.500 9.500h5L4.500 15.500l10-9.500H9z" fill="#f28a2e" /></svg>
        84
      </Zappers>
      <Viewers>No viewer data available</Viewers>
    </Page>
  );
}
